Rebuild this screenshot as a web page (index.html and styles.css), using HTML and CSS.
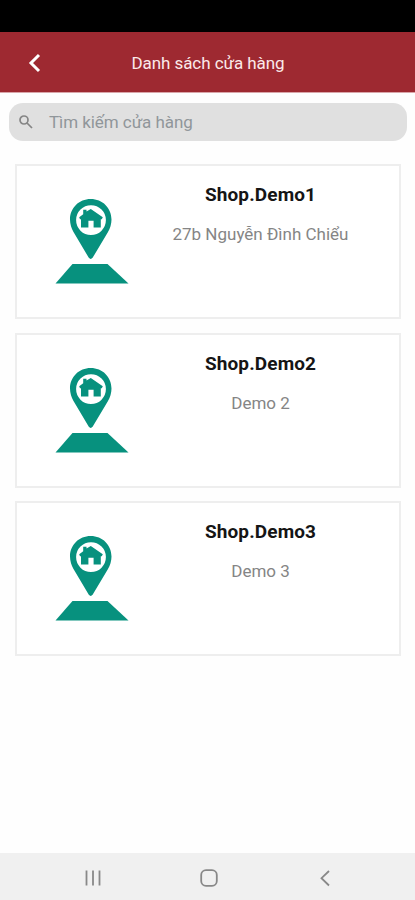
FILE: index.html
```html
<!DOCTYPE html>
<html lang="vi">
<head>
<meta charset="utf-8">
<title>Danh sách cửa hàng</title>
<link rel="stylesheet" href="styles.css">
</head>
<body>
<svg width="0" height="0" class="defs">
  <symbol id="shop-pin" viewBox="0 0 74 86">
    <path fill-rule="evenodd" d="M35.700 0C24 0 15 9 15 20.500C15 25 16.500 29.500 18.500 33L33.800 58.800Q35.700 61 37.600 58.800L53 33C55 29.500 56.500 25 56.500 20.500C56.500 9 47.500 0 35.700 0ZM36 6.200A14.900 14.900 0 1 1 36 36A14.900 14.900 0 1 1 36 6.200Z"/>
    <path d="M28.200 10.700H31.500V12.500L35.800 10L47.800 18.200L46.800 20.200H45.800V28.500H38.600V21.800H33.400V28.500H26V20.200H25L24.200 18.200L28.200 15.200Z"/>
    <path d="M17.500 65H52.500L73.500 84.500H0.500Z"/>
  </symbol>
</svg>
<div class="screen">
  <div class="status"></div>
  <header class="header">
    <svg class="back" viewBox="0 0 12 20"><path d="M10.500 2L2.500 10L10.500 18"/></svg>
    <h1>Danh sách cửa hàng</h1>
  </header>
  <main>
    <div class="search">
      <svg viewBox="0 0 14 14"><circle cx="5" cy="5" r="4"/><path d="M8 8L13 13"/></svg>
      <span>Tìm kiếm cửa hàng</span>
    </div>
    <section class="list">
      <article class="card">
        <svg class="pin"><use href="#shop-pin"/></svg>
        <div class="info"><h2>Shop.Demo1</h2><p>27b Nguyễn Đình Chiểu</p></div>
      </article>
      <article class="card">
        <svg class="pin"><use href="#shop-pin"/></svg>
        <div class="info"><h2>Shop.Demo2</h2><p>Demo 2</p></div>
      </article>
      <article class="card">
        <svg class="pin"><use href="#shop-pin"/></svg>
        <div class="info"><h2>Shop.Demo3</h2><p>Demo 3</p></div>
      </article>
    </section>
  </main>
  <nav class="nav">
    <svg viewBox="0 0 18 18"><path d="M2.500 1.500V16.500M9 1.500V16.500M15.500 1.500V16.500"/></svg>
    <svg viewBox="0 0 18 18"><rect x="1.200" y="1.200" width="15.600" height="15.600" rx="4.800"/></svg>
    <svg viewBox="0 0 18 18"><path d="M13 2L5.500 9.200L13 16.500"/></svg>
  </nav>
</div>
</body>
</html>
```
FILE: styles.css
```css
* { box-sizing: border-box; }
body { margin: 0; font-family: Roboto, "Noto Sans", sans-serif; background: #fefefe; }
h1, h2, p { margin: 0; }
.defs { display: none; }
.screen { height: 900px; display: flex; flex-direction: column; }
.status { height: 32px; background: #000; }
.header {
  height: 61px;
  padding: 2px 28px 0;
  display: grid;
  grid-template-columns: 20px 1fr 20px;
  align-items: center;
  background: #9e2931;
  border-bottom: 1px solid #d9a5a9;
}
.back { width: 13px; height: 20px; fill: none; stroke: #fff; stroke-width: 3; }
.header h1 {
  padding-left: 1px;
  color: #fbeaea;
  font-size: 17px;
  font-weight: 400;
  line-height: 22px;
  letter-spacing: -0.060px;
  text-align: center;
  white-space: nowrap;
}
main { flex: 1; padding: 10px 8px 0 9px; }
.search {
  height: 38px;
  padding-left: 10px;
  display: flex;
  align-items: center;
  gap: 16px;
  border-radius: 14px;
  background: #e0e0e0;
  color: #90969a;
  font-size: 17px;
  letter-spacing: -0.060px;
}
.search svg { width: 14px; height: 14px; fill: none; stroke: #858585; stroke-width: 1.7; }
.list { padding: 23px 6px 0; display: grid; gap: 13.700px; }
.card {
  height: 155px;
  padding: 17px 0 0 38px;
  display: flex;
  gap: 26px;
  background: #fff;
  border: 2px solid #eee;
}
.pin { width: 74px; height: 86px; margin-top: 16px; flex: none; fill: #07917e; }
.info { width: 211px; text-align: center; }
.info h2 { color: #151515; font-size: 19px; font-weight: 700; line-height: 24px; letter-spacing: 0.120px; }
.info p { margin-top: 15px; color: #858585; font-size: 17px; line-height: 24px; }
.nav {
  height: 47px;
  padding: 2px 32px 0 35px;
  display: grid;
  grid-template-columns: repeat(3, 1fr);
  align-items: center;
  justify-items: center;
  background: #f0f0f0;
}
.nav svg { width: 18px; height: 18px; fill: none; stroke: #888; stroke-width: 1.800; }
```
